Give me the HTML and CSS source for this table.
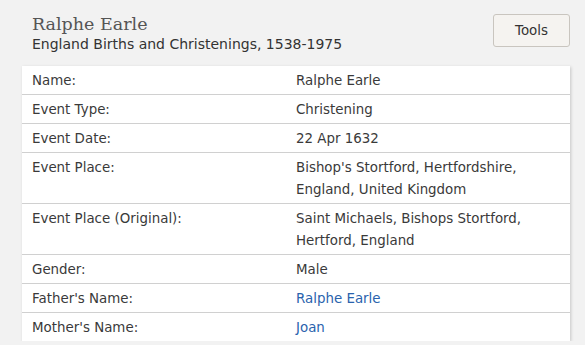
FILE: index.html
```html
<!DOCTYPE html>
<html>
<head>
<meta charset="utf-8">
<link rel="stylesheet" href="styles.css">
</head>
<body>
<div class="page">
  <div class="header">
    <div class="titles">
      <h1 class="title">Ralphe Earle</h1>
      <div class="subtitle">England Births and Christenings, 1538-1975</div>
    </div>
    <button class="tools">Tools</button>
  </div>
  <div class="card">
    <div class="row"><div class="label">Name:</div><div class="value">Ralphe Earle</div></div>
    <div class="row"><div class="label">Event Type:</div><div class="value">Christening</div></div>
    <div class="row"><div class="label">Event Date:</div><div class="value">22 Apr 1632</div></div>
    <div class="row"><div class="label">Event Place:</div><div class="value">Bishop's Stortford, Hertfordshire,<br>England, United Kingdom</div></div>
    <div class="row"><div class="label">Event Place (Original):</div><div class="value">Saint Michaels, Bishops Stortford,<br>Hertford, England</div></div>
    <div class="row"><div class="label">Gender:</div><div class="value">Male</div></div>
    <div class="row"><div class="label">Father's Name:</div><div class="value"><a class="link" href="#">Ralphe Earle</a></div></div>
    <div class="row last"><div class="label">Mother's Name:</div><div class="value"><a class="link" href="#">Joan</a></div></div>
  </div>
</div>
</body>
</html>
```
FILE: styles.css
```css
html, body {
  margin: 0;
  padding: 0;
  background: #f2f2f2;
}
body {
  font-family: "DejaVu Sans", Verdana, sans-serif;
  font-size: 13.4px;
  color: #3a3a3a;
}
.page {
  padding: 12px 15px 0 22px;
}
.header {
  display: flex;
  justify-content: space-between;
  align-items: flex-start;
  padding-left: 10px;
  height: 54px;
}
.title {
  margin: 0;
  font-family: "DejaVu Serif", serif;
  font-weight: normal;
  font-size: 17.5px;
  line-height: 24px;
  color: #555;
}
.subtitle {
  font-size: 14px;
  line-height: 17px;
  color: #333;
}
.tools {
  margin-top: 2px;
  width: 77px;
  height: 33px;
  background: #f5f3f0;
  border: 1px solid #c9c5bf;
  border-radius: 3px;
  font-family: "DejaVu Sans", Verdana, sans-serif;
  font-size: 13.4px;
  color: #333;
  padding: 0;
}
.card {
  width: 548px;
  background: #fff;
  box-shadow: 1px 1px 3px rgba(0,0,0,0.18);
}
.row {
  display: flex;
  border-bottom: 1px solid #d0d0d0;
  padding: 4px 10px 2px;
  line-height: 22px;
}
.row.last {
  border-bottom: none;
}
.label {
  width: 264px;
  flex: none;
}
.value {
  flex: 1;
}
.link {
  color: #2a63ad;
  text-decoration: none;
}
```
